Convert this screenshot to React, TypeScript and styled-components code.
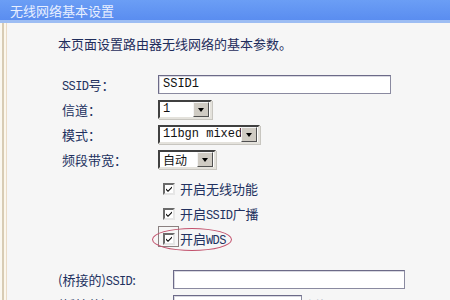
import React from "react";
import styled, { createGlobalStyle } from "styled-components";

const GlobalStyle = createGlobalStyle`
  html, body {
    margin: 0;
    padding: 0;
    background: #f6f6f6;
    overflow: hidden;
  }
  body {
    font-family: "Noto Sans CJK SC", "Noto Sans", sans-serif;
  }
`;

const Page = styled.div`
  width: 450px;
  height: 300px;
  overflow: hidden;
  background: #f6f6f6;
`;

const TitleBar = styled.div`
  height: 20px;
  padding-left: 10px;
  display: flex;
  align-items: center;
  background: linear-gradient(#6b9ef5, #5a8df0);
  border-bottom: 3px solid #9dbdf3;
  color: #e8efff;
  font-size: 13px;
`;

const Body = styled.div`
  padding: 11px 0 0 58px;
  height: 300px;
  box-shadow: inset 2px 0 #fbf8f0, inset 4px 0 #d8ccb4, inset 6px 0 #fcf7ec,
    inset 7px 0 #eadbc6;
`;

const Intro = styled.div`
  height: 20px;
  line-height: 20px;
  font-size: 13px;
  color: #1f2d5c;
  margin-bottom: 18px;
`;

const Row = styled.div`
  position: relative;
  height: 25px;
  display: flex;
  align-items: center;
  font-size: 13px;
  color: #22315f;
`;

const Label = styled.div<{ $width: number }>`
  width: ${(p) => p.$width}px;
  padding-left: ${(p) => (p.$width > 100 ? 0 : 4)}px;
  box-sizing: border-box;
  flex-shrink: 0;
  white-space: nowrap;
`;

const Latin = styled.span`
  font-family: "Liberation Mono", monospace;
  font-size: 12px;
  letter-spacing: -0.6px;
`;

const TextInput = styled.div<{ $width: number }>`
  width: ${(p) => p.$width}px;
  height: 19px;
  flex-shrink: 0;
  box-sizing: border-box;
  background: #fff;
  border: 1px solid #8a8aa0;
  border-top-color: #6c6a88;
  border-left-color: #6c6a88;
  box-shadow: inset 1px 1px #d8d8e0;
  font-family: "Liberation Mono", monospace;
  font-size: 12px;
  color: #111;
  padding-left: 4px;
  line-height: 17px;
`;

const Select = styled.div<{ $width: number }>`
  width: ${(p) => p.$width}px;
  height: 19px;
  box-sizing: border-box;
  display: flex;
  align-items: stretch;
  background: #fff;
  border: 2px solid;
  border-color: #404040 #e4e2dc #e4e2dc #404040;
  box-shadow: 1px 1px #c8c6c0;
`;

const SelectValue = styled.div<{ $mono?: boolean }>`
  flex: 1;
  display: flex;
  align-items: center;
  padding-left: 3px;
  font-family: ${(p) =>
    p.$mono ? `"Liberation Mono", monospace` : `"Noto Sans CJK SC", sans-serif`};
  font-size: 12px;
  line-height: 15px;
  color: #111;
  white-space: nowrap;
  overflow: hidden;
`;

const DropButton = styled.div`
  width: 14px;
  margin-right: 1px;
  background: #cfcbc3;
  border: 1px solid;
  border-color: #f4f4f4 #505050 #505050 #f4f4f4;
  display: flex;
  align-items: center;
  justify-content: center;
`;

const Arrow = styled.span`
  width: 0;
  height: 0;
  border-left: 3.5px solid transparent;
  border-right: 3.5px solid transparent;
  border-top: 4px solid #000;
`;

const CheckGap = styled.div`
  height: 4px;
`;

const CheckRow = styled(Row)`
  padding-left: 105px;
  gap: 5px;
`;

const CheckBox = styled.span`
  width: 12px;
  height: 12px;
  box-sizing: border-box;
  background: #fff;
  border: 2px solid;
  border-color: #6a6a6a #e6e6e6 #e6e6e6 #6a6a6a;
  display: flex;
  align-items: center;
  justify-content: center;
`;

const FocusSquare = styled.span`
  position: absolute;
  left: 100px;
  top: 0;
  width: 21px;
  height: 21px;
  border: 1px solid #8a8080;
  box-sizing: border-box;
`;

const Ellipse = styled.span`
  position: absolute;
  left: 94px;
  top: 2px;
  width: 80px;
  height: 23px;
  border: 1.5px solid #c2516c;
  border-radius: 50%;
  box-sizing: border-box;
`;

const Section = styled.div`
  margin-top: 16px;
`;

const Hint = styled.span`
  margin-left: 5px;
  color: #b8bcc8;
  font-size: 12px;
  white-space: nowrap;
`;

const Check = () => (
  <CheckBox>
    <svg width="8" height="8" viewBox="0 0 8 8">
      <path d="M1 3.5 L3 5.5 L7 1.5 L7 3 L3 7 L1 5 Z" fill="#000" />
    </svg>
  </CheckBox>
);

const Drop = () => (
  <DropButton>
    <Arrow />
  </DropButton>
);

export default function App() {
  return (
    <Page>
      <GlobalStyle />
      <TitleBar>无线网络基本设置</TitleBar>
      <Body>
        <Intro>本页面设置路由器无线网络的基本参数。</Intro>
        <Row>
          <Label $width={100}>
            <Latin>SSID</Latin>号：
          </Label>
          <TextInput $width={233}>SSID1</TextInput>
        </Row>
        <Row>
          <Label $width={100}>信道：</Label>
          <Select $width={54}>
            <SelectValue $mono>1</SelectValue>
            <Drop />
          </Select>
        </Row>
        <Row>
          <Label $width={100}>模式：</Label>
          <Select $width={102}>
            <SelectValue $mono>11bgn mixed</SelectValue>
            <Drop />
          </Select>
        </Row>
        <Row>
          <Label $width={100}>频段带宽：</Label>
          <Select $width={58}>
            <SelectValue>自动</SelectValue>
            <Drop />
          </Select>
        </Row>
        <CheckGap />
        <CheckRow>
          <Check />
          开启无线功能
        </CheckRow>
        <CheckRow>
          <Check />
          <span>
            开启<Latin>SSID</Latin>广播
          </span>
        </CheckRow>
        <CheckRow>
          <FocusSquare />
          <Check />
          <span>
            开启<Latin>WDS</Latin>
          </span>
          <Ellipse />
        </CheckRow>
        <Section>
          <Row>
            <Label $width={115}>
              (桥接的)<Latin>SSID</Latin>:
            </Label>
            <TextInput $width={232} />
          </Row>
          <Row>
            <Label $width={115}>
              (桥接的)<Latin>BSSID</Latin>:
            </Label>
            <TextInput $width={129} />
            <Hint>例如：00-1D-0F-11-22-33</Hint>
          </Row>
        </Section>
      </Body>
    </Page>
  );
}
